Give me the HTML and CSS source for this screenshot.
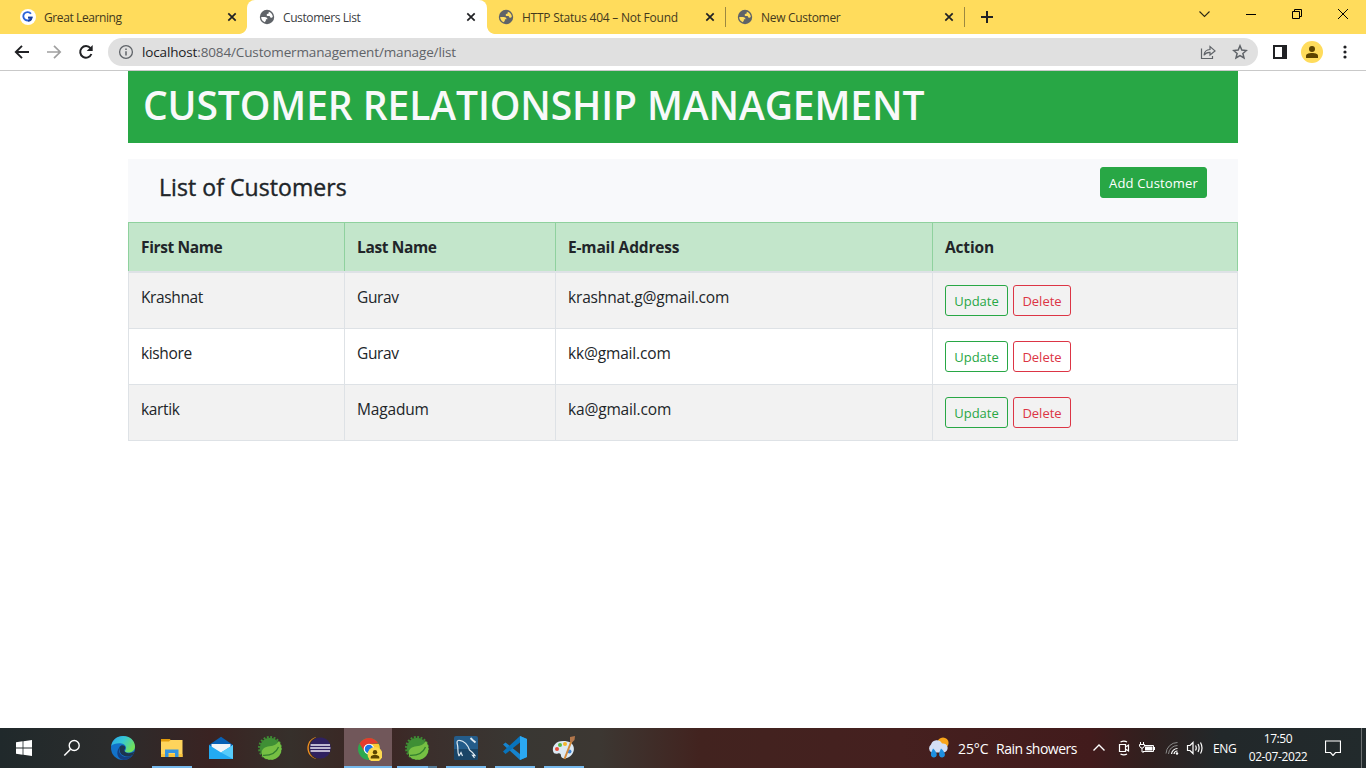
FILE: index.html
```html
<!DOCTYPE html>
<html lang="en">
<head>
<meta charset="utf-8">
<title>Customers List</title>
<link rel="stylesheet" href="styles.css">
</head>
<body>
<svg width="0" height="0" class="defs" aria-hidden="true">
  <defs>
    <symbol id="globe" viewBox="0 0 16 16"><circle cx="8" cy="8" r="7.2" fill="#5f6368"/><path d="M2.200 8H5.800C7.600 8 8.600 9 8.500 10.300H6.900V11.600L5.800 13.200C3.600 12.400 2.100 10.300 2.200 8ZM9.800 2.700C12.200 3.400 13.700 5.400 13.800 7.800 13.200 8.800 12.300 9 11.400 8.400L10.600 7H8.500C7.600 6.700 7.400 5.700 8.100 5L9.600 4.600Z" class="land"/></symbol>
    <symbol id="close" viewBox="0 0 16 16"><path d="M4.3 4.3L11.7 11.7M11.7 4.3L4.3 11.7" stroke="#202124" stroke-width="1.7" fill="none"/></symbol>
    <symbol id="spring" viewBox="0 0 24 24"><circle cx="12" cy="12" r="10.300" fill="#3f8f35"/><circle cx="12" cy="12" r="11" fill="none" stroke="#3f8f35" stroke-width="2" stroke-dasharray="1.9 1.55"/><path d="M20.800 5C24.500 10 24.500 17.500 19.500 21.500 15 25 8.500 24.300 4.500 20.500 2 14.500 5.500 10.800 11.500 10.200 16 9.800 19 8.500 20.800 5Z" fill="#76bf43"/><path d="M5 19.300C11.500 19.500 18 17.500 20.500 11" fill="none" stroke="#33802e" stroke-width="1.300"/></symbol>
  </defs>
</svg>
<div class="screen">
  <header class="tabstrip">
    <div class="tab">
      <svg class="fav" viewBox="0 0 16 16"><circle cx="8" cy="8" r="8" fill="#fff"/><path d="M10.9 4.8A4.2 4.2 0 1 0 11.5 8.6H8.3" fill="none" stroke="#2a62d8" stroke-width="1.9"/><path d="M8 8.6H11.6A4 4 0 0 1 8 12" fill="none" stroke="#1b3f9c" stroke-width="1.7"/></svg>
      <span class="title t1">Great Learning</span><svg class="x"><use href="#close"/></svg>
    </div>
    <div class="tab active">
      <svg class="fav"><use href="#globe"/></svg><span class="title t2">Customers List</span><svg class="x"><use href="#close"/></svg>
    </div>
    <div class="tab sep">
      <svg class="fav"><use href="#globe"/></svg><span class="title t3">HTTP Status 404 – Not Found</span><svg class="x"><use href="#close"/></svg>
    </div>
    <div class="tab sep">
      <svg class="fav"><use href="#globe"/></svg><span class="title t4">New Customer</span><svg class="x"><use href="#close"/></svg>
    </div>
    <svg class="newtab" viewBox="0 0 16 16"><path d="M8 2V14M2 8H14" stroke="#202124" stroke-width="2"/></svg>
    <div class="wincontrols">
      <svg viewBox="0 0 46 34"><path d="M17.5 11.5L22.5 16.5 27.5 11.5" fill="none" stroke="#2b2714" stroke-width="1.100"/></svg>
      <svg viewBox="0 0 46 34"><path d="M18 14.5H28" stroke="#000"/></svg>
      <svg viewBox="0 0 46 34"><path d="M18.500 11.500H25.500V18.500H18.500ZM20.500 11.500V9.500H27.500V16.500H25.500" fill="none" stroke="#000"/></svg>
      <svg viewBox="0 0 46 34"><path d="M18 9L28 19M28 9L18 19" stroke="#000" fill="none"/></svg>
    </div>
  </header>
  <div class="toolbar">
    <svg class="nav" viewBox="0 0 16 16"><path d="M15 8H2M8 1.800L1.800 8 8 14.200" fill="none" stroke="#202124" stroke-width="1.900"/></svg>
    <svg class="nav" viewBox="0 0 16 16"><path d="M1 8H14M8 1.800L14.200 8 8 14.200" fill="none" stroke="#a0a0a0" stroke-width="1.700"/></svg>
    <svg class="nav" viewBox="0 0 16 16"><path d="M13.400 10A5.800 5.800 0 1 1 12.500 4.200" fill="none" stroke="#202124" stroke-width="2"/><path d="M14.700 1V7H8.700Z" fill="#202124"/></svg>
    <div class="omnibox">
      <svg class="info" viewBox="0 0 16 16"><circle cx="8" cy="8" r="6.400" fill="none" stroke="#5f6368" stroke-width="1.300"/><path d="M8 7.200V11.600M8 4.400V6" stroke="#5f6368" stroke-width="1.500"/></svg>
      <span class="url"><b>localhost</b>:8084/Customermanagement/manage/list</span>
      <svg class="share" viewBox="0 0 16 16"><path d="M1.500 4.500V14.500H12.500V12" fill="none" stroke="#5f6368" stroke-width="1.200"/><path d="M4 11.200C4.400 7.500 6.500 5.600 10 5.500V2.600L15 6.900 10 11V8.400C7.500 8.300 5.500 9 4 11.200Z" fill="none" stroke="#5f6368" stroke-width="1.200"/></svg>
      <svg class="star" viewBox="0 0 16 16"><path d="M8 1.800L9.800 6.100 14.400 6.500 10.900 9.500 12 14 8 11.600 4 14 5.100 9.500 1.600 6.500 6.200 6.100Z" fill="none" stroke="#5f6368" stroke-width="1.500"/></svg>
    </div>
    <svg class="panel" viewBox="0 0 14 14"><path d="M1 1H13V13H1Z" fill="none" stroke="#202124" stroke-width="2"/><path d="M9 0H14V14H9Z" fill="#202124"/></svg>
    <svg class="avatar" viewBox="0 0 22 22"><circle cx="11" cy="11" r="11" fill="#ffdc5c"/><circle cx="11" cy="8" r="3" fill="#5c4300"/><path d="M5 17V15C5 12.800 8 12 11 12S17 12.800 17 15V17Z" fill="#5c4300"/></svg>
    <svg class="dots" viewBox="0 0 4 16"><circle cx="2" cy="3" r="1.600"/><circle cx="2" cy="8" r="1.600"/><circle cx="2" cy="13" r="1.600"/></svg>
  </div>
  <main class="page">
    <div class="container">
      <h1 class="banner">CUSTOMER RELATIONSHIP MANAGEMENT</h1>
      <div class="subhead"><h2>List of Customers</h2><a class="btn solid">Add Customer</a></div>
      <table class="grid">
        <colgroup><col class="c1"><col class="c2"><col class="c3"><col class="c4"></colgroup>
        <thead><tr><th>First Name</th><th>Last Name</th><th class="mail">E-mail Address</th><th class="mail">Action</th></tr></thead>
        <tbody>
          <tr><td>Krashnat</td><td>Gurav</td><td class="mail">krashnat.g@gmail.com</td><td><div class="actions"><a class="btn update">Update</a><a class="btn delete">Delete</a></div></td></tr>
          <tr><td>kishore</td><td>Gurav</td><td class="mail">kk@gmail.com</td><td><div class="actions"><a class="btn update">Update</a><a class="btn delete">Delete</a></div></td></tr>
          <tr><td>kartik</td><td class="mail">Magadum</td><td class="mail">ka@gmail.com</td><td><div class="actions"><a class="btn update">Update</a><a class="btn delete">Delete</a></div></td></tr>
        </tbody>
      </table>
    </div>
  </main>
  <footer class="taskbar">
    <div class="start"><svg width="16" height="16" viewBox="0 0 16 16" fill="#fff"><path d="M0 2.300L6.600 1.300V7.600H0ZM7.400 1.200L16 0V7.600H7.400ZM0 8.400H6.600V14.700L0 13.700ZM7.400 8.400H16V16L7.400 14.800Z"/></svg></div>
    <div class="start"><svg width="18" height="18" viewBox="0 0 18 18"><circle cx="11.200" cy="6.500" r="5" fill="none" stroke="#fff" stroke-width="1.400"/><path d="M7.500 10.200L1.300 16.500" stroke="#fff" stroke-width="1.500"/></svg></div>
    <div class="apps">
      <div class="app"><svg viewBox="0 0 24 24"><defs><linearGradient id="e1" x1="0" y1="0" x2="1" y2=".5"><stop offset="0" stop-color="#2aa5e8"/><stop offset=".5" stop-color="#36c7d5"/><stop offset="1" stop-color="#70e05a"/></linearGradient></defs><circle cx="12" cy="12" r="12" fill="#1272c9"/><path d="M.3 10C1 4 6 0 12 0 19 0 24 4.800 24 10.500 24 15 20 17 16 16.500 13.500 16.200 13.800 15 14.800 13.500 16 11 14 8 10.500 7.500 6 7 2 8 .3 10Z" fill="url(#e1)"/><path d="M8.500 11C6.500 16 10 20.500 15 21 18 21.200 20.500 20 22 18.800 19.500 22.500 16 24 12.500 24 7 23.500 4 17 8.500 11Z" fill="#153f82"/><path d="M8.500 11C10 8.500 14 9 14.300 11.500 14.500 13 12.500 14 13.700 15.500 15.500 18 20 17.400 23.500 15.500L22 18.800C18 22 10.500 20.600 9 16 8.500 14 8 12.500 8.500 11Z" fill="#1c3550"/></svg></div>
      <div class="app open"><svg viewBox="0 0 24 24"><path d="M1 3H10L11 5V8H1Z" fill="#e39c0b"/><path d="M1 5.500H9L10.500 4H22.500V21H1Z" fill="#ffd45c"/><path d="M1 18H22.500V21H1Z" fill="#f8c23d"/><path d="M5 21V13.500H18.500V21H15V17H8.500V21Z" fill="#3594df"/></svg></div>
      <div class="app"><svg viewBox="0 0 24 24"><path d="M0 9L12 .8 24 9V20H0Z" fill="#0861b5"/><path d="M2.500 8H21.500V14L12 18 2.500 14Z" fill="#f1f5f8"/><path d="M0 9L12 16.500 24 9V23H0Z" fill="#23aaf2"/><path d="M12 16.500L24 9V23Z" fill="#57ccfb"/></svg></div>
      <div class="app"><svg><use href="#spring"/></svg></div>
      <div class="app"><svg viewBox="0 0 24 24"><path d="M9 1C-2.500 4-2.500 20 9 23Z" fill="#f7941e"/><circle cx="13.300" cy="12" r="11.600" fill="#3a2c2b"/><circle cx="13.300" cy="12" r="10.600" fill="#2f2160"/><path d="M3.600 9H23M3.200 12H23.400M3.600 15H23" stroke="#eeeaf6" stroke-width="1.700"/></svg></div>
      <div class="app open current"><svg viewBox="0 0 24 24"><circle cx="11" cy="12" r="11" fill="#2da94f"/><path d="M1.500 6.500A11 11 0 0 1 20.500 6.500L11 7 6 14Z" fill="#e33b2e"/><path d="M20.500 6.500A11 11 0 0 1 11 23L16 13 13 7H20.800Z" fill="#fcc934"/><circle cx="11" cy="12" r="5.300" fill="#fff"/><circle cx="11" cy="12" r="4.200" fill="#1a73e8"/><circle cx="17" cy="17.500" r="7.500" fill="#fdd94f"/><circle cx="17" cy="15.300" r="2.200" fill="#5c4300"/><path d="M12.700 21.500V20C13 18.500 15 18 17 18S21 18.500 21.300 20V21.500Z" fill="#5c4300"/></svg></div>
      <div class="app open multi"><svg><use href="#spring"/></svg></div>
      <div class="app open"><svg viewBox="0 0 24 24"><rect width="24" height="24" rx="2" fill="#245c8a"/><path d="M0 13H24V22A2 2 0 0 1 22 24H2A2 2 0 0 1 0 22Z" fill="#1a4567"/><path d="M5 20C3 16 4.500 13 3.500 9 2.500 6 3 4 5.500 4.300 10 4.500 14 9 15.500 14 17.500 15.500 19.500 17 21 19.500L18.500 19.300 20.500 22M5 20L7 16.500 8.500 20" fill="none" stroke="#dfe9f0" stroke-width="1.200"/><path d="M16.500 2L18.500 4 21.500 6.500" stroke="#dfe9f0" stroke-width="1.800"/></svg></div>
      <div class="app open"><svg viewBox="0 0 24 24"><path d="M17 0L24 3V21L17 24 0 8.500 2.500 6.500 17 18Z" fill="#1684ce"/><path d="M17 0V6.500L2.500 18 0 15.500Z" fill="#0874bd"/><path d="M17 0L24 3V21L17 24Z" fill="#2ba8f2"/></svg></div>
      <div class="app open"><svg viewBox="0 0 24 24"><path d="M11 5C4 5 0 10 1 15 1.500 18 4 18 6 17.500 8 17 9 18 9 20 9.500 23.500 15 23 18.500 20 23 16 23 10 19 7 17 5.500 14 5 11 5Z" fill="#dce9f3"/><circle cx="5" cy="13" r="2" fill="#e84b38"/><circle cx="8" cy="9" r="2" fill="#56b947"/><circle cx="13" cy="8" r="2" fill="#f5b62b"/><circle cx="17.500" cy="15.500" r="2" fill="#3d83d3"/><path d="M12.500 23L19.500 5" stroke="#d38a3c" stroke-width="2"/><path d="M18 1L23 0 22.500 4 20 6.500 18 5Z" fill="#b2764b"/></svg></div>
    </div>
    <div class="tray">
      <svg class="wx" viewBox="0 0 24 22"><circle cx="17" cy="6" r="5.600" fill="#f9a51a"/><path d="M5.500 15.500A4.800 4.800 0 0 1 5 7.500 6 6 0 0 1 16 6.500 4.600 4.600 0 0 1 18 15.500Z" fill="#d3dff4"/><path d="M7 11.500C9 13 10.800 15.500 10.800 18A3 3 0 0 1 5 18.500C4.500 16 6 14 7 11.500ZM15 11.500C17 13 19 15.500 19 18A3 3 0 0 1 13.200 18.500C12.700 16 14 14 15 11.500Z" fill="#1e90e0"/></svg>
      <span class="temp">25°C</span><span class="cond">Rain showers</span>
      <svg class="chev" viewBox="0 0 14 14"><path d="M1.500 9.500L7 4 12.500 9.500" fill="none" stroke="#fff" stroke-width="1.400"/></svg>
      <svg class="meet" viewBox="0 0 14 16"><path d="M2.500 4.500H8.500V11.500H2.500ZM8.500 7L11.500 5V11L8.500 9M3.500 2Q7 .2 10 2M3.500 14Q7 15.800 10 14" fill="none" stroke="#fff" stroke-width="1.200"/></svg>
      <svg class="bat" viewBox="0 0 16 12"><path d="M5 3.500H14.500V9.500H4M15.500 5V8" fill="none" stroke="#fff"/><path d="M6 4.500H13.500V8.500H6Z" fill="#fff"/><path d="M1.500 0V2M4.500 0V2M.5 2.500H5.500V4L4 6H2L.5 4ZM3 6V10H5" stroke="#fff" fill="none"/></svg>
      <svg class="wifi" viewBox="0 0 14 14"><g fill="none"><path d="M1 12.500A11.500 11.500 0 0 1 12.500 1.500M3.500 13A9 9 0 0 1 12.500 4.500" stroke="#8b8b8b"/><path d="M6.500 13A6 6 0 0 1 12.500 7.500M9 13A3.500 3.500 0 0 1 12.500 10" stroke="#fff" stroke-width="1.200"/></g><circle cx="12" cy="12.500" r="1.200" fill="#fff"/></svg>
      <svg class="snd" viewBox="0 0 18 14"><path d="M1.500 4.500H4L7 1.500V12.500L4 9.500H1.500ZM9.500 4.500Q11 7 9.500 9.500M12 3Q14.200 7 12 11M14.500 1.500Q17.500 7 14.500 12.500" fill="none" stroke="#fff" stroke-width="1.200"/></svg>
      <span class="lang">ENG</span>
      <div class="clock"><span>17:50</span><span>02-07-2022</span></div>
      <svg class="note" viewBox="0 0 16 16"><path d="M.500 1H15.500V12.500H10.500L8 15.500 5.500 12.500H.500Z" fill="none" stroke="#fff" stroke-width="1.200"/></svg>
      <i class="peek"></i>
    </div>
  </footer>
</div>
</body>
</html>
```
FILE: styles.css
```css
* { box-sizing: border-box; }
body { margin: 0; font-family: "Open Sans", "Noto Sans", sans-serif; color: #212529; background: #fff; }
svg { display: block; flex: none; }
.defs { position: absolute; }
.screen { width: 1366px; height: 768px; display: flex; flex-direction: column; overflow: hidden; white-space: nowrap; }

.tabstrip { height: 34px; flex: none; background: #ffdc5c; display: flex; padding-left: 8px; }
.tab { --land: #ffdc5c; width: 239px; flex: none; display: flex; align-items: center; padding: 0 7px 0 12px; position: relative; color: #43391c; }
.tab .title { flex: 1; margin-left: 8px; font-size: 12px; letter-spacing: -0.4px; }
.tab .t3 { letter-spacing: -0.24px; }
.tab .t4 { letter-spacing: -0.3px; }
.fav, .x { width: 16px; height: 16px; }
.land { fill: var(--land); }
.tab.active { --land: #fff; background: #fff; border-radius: 8px 8px 0 0; color: #3c4043; width: 240px; padding-right: 8px; margin-right: -1px; }
.tab.active::before, .tab.active::after { content: ""; position: absolute; bottom: 0; width: 8px; height: 8px; }
.tab.active::before { left: -8px; background: radial-gradient(circle at 0 0, transparent 7.5px, #fff 8.3px); }
.tab.active::after { right: -8px; background: radial-gradient(circle at 100% 0, transparent 7.5px, #fff 8.3px); }
.sep::after { content: ""; position: absolute; right: -1px; top: 7px; width: 1px; height: 20px; background: #9c8840; }
.newtab { width: 16px; height: 16px; margin: 9px 0 0 15px; }
.wincontrols { display: flex; margin-left: auto; }
.wincontrols svg { width: 46px; height: 34px; }

.toolbar { height: 37px; flex: none; border-bottom: 1px solid #c9c9c9; display: flex; align-items: center; padding-left: 14px; }
.nav { width: 16px; height: 16px; margin-right: 16px; }
.omnibox { width: 1150px; height: 28px; border-radius: 14px; background: #e0e0e0; display: flex; align-items: center; padding: 0 10px; margin-left: -2px; flex: none; }
.info { width: 16px; height: 16px; }
.url { flex: 1; margin-left: 8px; font-size: 13.5px; letter-spacing: -0.14px; color: #5f6368; }
.url b { font-weight: 400; color: #202124; }
.share { width: 16px; height: 16px; margin-right: 16px; }
.star { width: 16px; height: 16px; }
.panel { width: 14px; height: 14px; margin-left: 15px; }
.avatar { width: 22px; height: 22px; margin-left: 14px; }
.dots { width: 4px; height: 16px; margin-left: 20px; fill: #202124; }

.page { flex: 1; }
.container { width: 1110px; margin: 0 auto; }
.banner { margin: 0 0 16px; height: 72px; padding: 8px 15px; background: #28a745; color: #f8f9fa; font-size: 39px; line-height: 52px; letter-spacing: -0.1px; font-weight: 600; }
.subhead { height: 63px; background: #f8f9fa; display: flex; justify-content: space-between; align-items: flex-start; padding: 8px 31px 0; background: #f8f9fb; }
.subhead h2 { margin: 6px 0 0; font-size: 23px; line-height: 29px; font-weight: 500; letter-spacing: 0.07px; -webkit-text-stroke: 0.4px #212529; }
.btn { display: block; height: 31px; border: 1px solid; border-radius: 3px; font-size: 13px; line-height: 30px; text-align: center; }
.solid { width: 107px; background: #28a745; border-color: #28a745; color: #fff; letter-spacing: 0.15px; }
.grid { width: 1109px; border-collapse: collapse; table-layout: fixed; font-size: 15.5px; line-height: 24px; letter-spacing: -0.37px; }
.c1 { width: 216px; } .c2 { width: 211px; } .c3 { width: 377px; } .c4 { width: 305px; }
.grid th { text-align: left; background: #c3e6cb; border: 1px solid #8fd19e; border-bottom: 2px solid #dee2e6; padding: 12px; font-weight: 700; }
.grid td { vertical-align: top; border: 1px solid #dee2e6; padding: 12px; }
.grid .mail { letter-spacing: -0.16px; }
.grid tbody tr:nth-child(odd) { background: #f2f2f2; }
.actions { display: flex; gap: 5px; letter-spacing: 0; }
.update { width: 63px; color: #28a745; }
.delete { width: 58px; color: #dc3545; }

.taskbar { height: 40px; flex: none; display: flex; color: #fff; background: linear-gradient(90deg, #20292b 0, #2b2c2c 110px, #3a2322 210px, #36302b 290px, #3c2422 375px, #3b2f2c 430px, #393733 520px, #3c3732 600px, #42231f 700px, #45201f 900px, #421b1c 1090px, #30201f 1150px, #22282a 1220px, #222a2c 100%); }
.start { width: 48px; display: flex; align-items: center; justify-content: center; }
.apps { display: flex; gap: 1px; margin-left: 3px; }
.app { width: 48px; display: flex; align-items: center; justify-content: center; position: relative; }
.app svg { width: 24px; height: 24px; }
.open::after { content: ""; position: absolute; left: 4px; right: 4px; bottom: 0; height: 2px; background: #76b9ed; }
.current { background: #71575a; }
.current svg { margin-left: 3px; margin-top: 2px; }
.current::after { left: 0; right: 0; }
.multi::after { background: linear-gradient(90deg, #76b9ed 31px, #557c99 31px); }
.tray { flex: 1; display: flex; align-items: center; justify-content: flex-end; }
.wx { width: 24px; height: 22px; }
.temp { width: 38px; margin-left: 8px; font-size: 14px; letter-spacing: -0.1px; }
.cond { width: 96px; font-size: 14px; letter-spacing: -0.5px; }
.chev { width: 14px; height: 14px; margin-right: 11px; }
.meet { width: 14px; height: 16px; margin-right: 8px; }
.bat { width: 16px; height: 12px; margin-right: 10px; }
.wifi { width: 14px; height: 14px; margin-right: 7px; }
.snd { width: 18px; height: 14px; margin-right: 9px; }
.lang { width: 30px; font-size: 12px; letter-spacing: -0.4px; }
.clock { width: 70px; display: flex; flex-direction: column; align-items: center; font-size: 12px; line-height: 18px; letter-spacing: -0.4px; }
.note { width: 16px; height: 16px; margin-left: 12px; }
.peek { width: 1px; height: 40px; background: #6c7071; margin: 0 4px 0 20px; }
```
